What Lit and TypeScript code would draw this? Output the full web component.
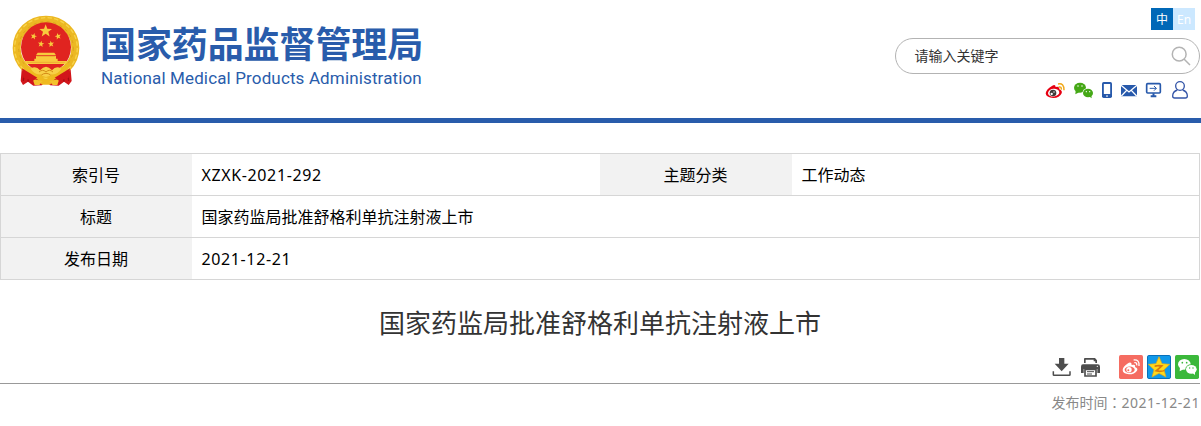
import { LitElement, html, css, svg } from "lit";
import { customElement, property } from "lit/decorators.js";

const star = (cx: number, cy: number, r: number, turn = 0) => {
  const points = Array.from({ length: 10 }, (_, i) => {
    const a = ((i * 36 - 90 + turn) * Math.PI) / 180;
    const d = i % 2 ? r * 0.42 : r;
    return `${(cx + d * Math.cos(a)).toFixed(1)},${(cy + d * Math.sin(a)).toFixed(1)}`;
  });
  return svg`<polygon points=${points.join(" ")} />`;
};

@customElement("national-emblem")
class NationalEmblem extends LitElement {
  static styles = css`
    :host {
      display: block;
    }
    svg {
      display: block;
    }
  `;

  render() {
    return html`
      <svg width="68" height="72" viewBox="36 30 204 216">
        <path d="M66 183 L62 228 L69 240 L84 230 L100 242 L126 241 L138 228 L150 241 L176 242 L192 230 L206 240 L215 228 L211 183 L180 196 H98 Z" fill="#d2161b" />
        <path d="M74 192 l-4 36 M88 200 l-4 30 M202 192 l4 36 M188 200 l4 30" stroke="#a50c12" stroke-width="4" />
        <ellipse cx="138" cy="129" rx="88" ry="85" fill="none" stroke="#ecb823" stroke-width="24" />
        <ellipse cx="138" cy="129" rx="94" ry="91" fill="none" stroke="#f8d44a" stroke-width="4" stroke-dasharray="13 7" />
        <ellipse cx="138" cy="129" rx="82" ry="79" fill="none" stroke="#dca31d" stroke-width="3" stroke-dasharray="9 11" />
        <circle cx="138" cy="127" r="75" fill="#e02420" />
        <g fill="#f8cb3d">
          ${star(137, 78, 20)} ${star(101, 94, 10, 15)} ${star(174, 94, 10, -15)}
          ${star(123, 117, 10, 8)} ${star(153, 117, 10, -8)}
          <path d="M113 143 h50 l5 8 h-60z" />
          <path d="M108 153 h60 v12 h-60z" />
          <path d="M103 161 h70 v7 h28 l-3 9 H78 l-3-9 h28z" />
        </g>
        <path d="M110 154 h56 M82 172 h112" stroke="#e58e28" stroke-width="1.5" />
        <path d="M70 179 Q96 183 112 205 Q126 222 138 222 Q150 222 164 205 Q180 183 206 179 Q190 204 170 215 L150 239 H126 L106 215 Q86 204 70 179Z" fill="#efb91f" />
        <path d="M92 191 Q108 181 120 196 Q138 174 156 196 Q168 181 184 191 Q172 210 155 208 Q138 224 121 208 Q104 210 92 191Z" fill="#f8d047" />
        <path d="M117 201 Q128 191 138 201 Q148 191 159 201 M124 210 Q138 200 152 210" fill="none" stroke="#d58b17" stroke-width="3" />
        <path d="M98 222 L128 228 L118 240 H104Z M178 222 L148 228 L158 240 H172Z" fill="#f4c22d" />
        <path d="M66 190 L112 218 L98 228 L70 218Z M210 190 L164 218 L178 228 L206 218Z" fill="#d2161b" />
      </svg>
    `;
  }
}

@customElement("search-box")
class SearchBox extends LitElement {
  static styles = css`
    :host {
      display: block;
    }
    .search {
      box-sizing: border-box;
      display: flex;
      align-items: center;
      justify-content: space-between;
      width: 305px;
      height: 36px;
      padding: 0 8px 0 18.5px;
      border: 1px solid #b3b3b3;
      border-radius: 18px;
      color: #333;
      font-size: 14px;
      line-height: 34px;
    }
    svg {
      display: block;
    }
  `;

  render() {
    return html`
      <div class="search">
        <span>请输入关键字</span>
        <svg width="20" height="20" viewBox="0 0 20 20" fill="none" stroke="#b3b3b3" stroke-width="1.5">
          <circle cx="8.2" cy="8.2" r="6.9" />
          <path d="M13 13 L19 19" />
        </svg>
      </div>
    `;
  }
}

@customElement("quick-links")
class QuickLinks extends LitElement {
  static styles = css`
    :host {
      display: block;
    }
    .links {
      display: flex;
      gap: 7px;
    }
    svg {
      display: block;
    }
  `;

  render() {
    return html`
      <div class="links">
        <svg width="21" height="18" viewBox="0 0 63 54">
          <path d="M22 14 Q31 8 32 18 Q44 15 43 25 Q53 29 50 37 Q44 51 25 51 Q3 50 2 37 Q4 24 22 14Z" fill="#e60012" />
          <ellipse cx="26" cy="35" rx="17" ry="11.5" fill="#fff" transform="rotate(-8 26 35)" />
          <circle cx="24" cy="36" r="10" fill="#3e3a39" />
          <circle cx="20" cy="39" r="3.5" fill="#fff" />
          <circle cx="27" cy="33" r="2" fill="#fff" />
          <path d="M39 9 Q58 5 57 28 M41 18 Q50 16 49 26" fill="none" stroke="#f0a818" stroke-width="4.5" />
        </svg>
        <svg width="21" height="18" viewBox="0 0 63 54">
          <path d="M8 29 L7 40 L20 33Z" fill="#45a816" />
          <ellipse cx="21" cy="20" rx="18" ry="15" fill="#45a816" />
          <ellipse cx="45" cy="36" rx="16.5" ry="14.5" fill="#fff" />
          <ellipse cx="45" cy="36" rx="15" ry="13" fill="#45a816" />
          <path d="M48 46 L56 52 L55 42Z" fill="#45a816" />
          <g fill="#fff">
            <circle cx="15" cy="15" r="2.2" />
            <circle cx="27" cy="15" r="2.2" />
            <circle cx="40" cy="32" r="2" />
            <circle cx="50" cy="32" r="2" />
          </g>
        </svg>
        <svg width="12" height="18" viewBox="0 0 36 54">
          <rect x="3" y="3" width="30" height="48" rx="5" fill="#2759ab" />
          <rect x="8.5" y="9" width="19" height="30" fill="#fff" />
          <circle cx="18" cy="45" r="2.6" fill="#fff" />
        </svg>
        <svg width="18" height="18" viewBox="0 0 54 54">
          <rect x="3" y="12" width="48" height="34" rx="2" fill="#2759ab" />
          <path d="M3 13 L27 33 L51 13 M4 45 L20 28 M50 45 L34 28" fill="none" stroke="#fff" stroke-width="4" />
        </svg>
        <svg width="17" height="18" viewBox="0 0 51 54" fill="none" stroke="#2759ab">
          <rect x="5" y="8" width="41" height="28" rx="3" stroke-width="5" />
          <path d="M14 22 H34 M27 15 L34 22 L27 29" stroke-width="3" />
          <path d="M25.5 37 V46 M17 46 H34" stroke-width="6" />
        </svg>
        <svg width="20" height="18" viewBox="0 0 60 54" fill="none" stroke="#3556a8" stroke-width="4">
          <circle cx="33" cy="15" r="13" />
          <path d="M25 27 Q11 32 11 45 Q11 51 17 51 H49 Q55 51 55 45 Q55 32 41 27" />
        </svg>
      </div>
    `;
  }
}

@customElement("share-tools")
class ShareTools extends LitElement {
  static styles = css`
    :host {
      display: block;
    }
    .tools,
    .share {
      display: flex;
      align-items: center;
    }
    .tools {
      justify-content: flex-end;
      gap: 9px;
    }
    .share {
      gap: 4px;
      padding-left: 9px;
    }
    svg {
      display: block;
    }
  `;

  render() {
    return html`
      <div class="tools">
        <svg width="20" height="24" viewBox="0 0 60 72" fill="#4d4d4d">
          <path d="M21 9 H37 V26 H50 L29 49 L8 26 H21Z" />
          <path d="M4 49 V59 Q4 61 6 61 H52 Q54 61 54 59 V49" fill="none" stroke="#4d4d4d" stroke-width="4.5" />
        </svg>
        <svg width="20" height="24" viewBox="0 0 60 72" fill="#4d4d4d">
          <path d="M9 24 V11 Q9 9 12 9 H42 L48 16 V24 H43 V19 H38 V14 H14 V24Z" />
          <path d="M6 28 H50 Q57 28 57 35 V54 H49 V42 H8 V54 H0 V35 Q0 28 6 28Z" />
          <path d="M12 43 H45 V63 H12Z" fill="#fff" stroke="#4d4d4d" stroke-width="5" />
          <path d="M18 50 H39 M18 57 H33" stroke="#4d4d4d" stroke-width="3" />
          <circle cx="49" cy="34" r="2" fill="#fff" />
        </svg>
        <div class="share">
          <svg width="24" height="24" viewBox="0 0 72 72">
            <rect width="72" height="72" rx="5" fill="#f56c61" />
            <path d="M25 26 Q38 18 38 30 Q51 27 48 36 Q58 40 54 47 Q47 58 30 58 Q11 56 11 45 Q12 34 25 26Z" fill="#fff" />
            <ellipse cx="32" cy="44" rx="15" ry="9.5" fill="#f56c61" />
            <circle cx="30" cy="44" r="8" fill="#fff" />
            <circle cx="28" cy="46" r="3" fill="#f56c61" />
            <path d="M44 15 Q62 13 60 33 M46 23 Q55 22 53 31" fill="none" stroke="#fff" stroke-width="4" />
          </svg>
          <svg width="24" height="24" viewBox="0 0 72 72">
            <rect x="1.5" y="1.5" width="69" height="69" rx="4" fill="#1199e9" stroke="#0870ba" stroke-width="3" />
            <path d="M36 5 L45 26 L68 28 L51 44 L57 66 L36 55 L15 66 L21 44 L4 28 L27 26Z" fill="#ffd91b" stroke="#e9aa12" stroke-width="2" />
            <path d="M23 31 Q36 27 50 31 L34 46 Q44 48 53 44 V49 Q38 54 22 49 L38 35 Q30 34 23 36Z" fill="#d9780c" />
          </svg>
          <svg width="24" height="24" viewBox="0 0 72 72">
            <rect width="72" height="72" rx="5" fill="#3bb83b" />
            <g fill="#fff">
              <ellipse cx="28" cy="28" rx="19" ry="16" />
              <path d="M15 36 L14 49 L27 42Z" />
            </g>
            <ellipse cx="49" cy="43" rx="18" ry="15" fill="#3bb83b" />
            <ellipse cx="49" cy="43" rx="16" ry="13" fill="#fff" />
            <path d="M52 53 L60 60 V49Z" fill="#fff" />
            <g fill="#3bb83b">
              <circle cx="22" cy="23" r="2.5" />
              <circle cx="35" cy="23" r="2.5" />
              <circle cx="44" cy="39" r="2.2" />
              <circle cx="54" cy="39" r="2.2" />
            </g>
          </svg>
        </div>
      </div>
    `;
  }
}

@customElement("info-table")
class InfoTable extends LitElement {
  static styles = css`
    :host {
      display: block;
    }
    .table {
      border: 1px solid #d6d6d6;
      border-bottom: none;
      font-size: 16px;
      line-height: 43px;
      color: #000;
    }
    .row {
      display: grid;
      grid-template-columns: 191px 408px 192px 1fr;
      grid-template-rows: 41px;
      border-bottom: 1px solid #d6d6d6;
    }
    .label {
      padding-right: 1px;
      background: #f2f2f2;
      text-align: center;
    }
    .value {
      padding: 0 9.5px;
      white-space: nowrap;
    }
    .code {
      letter-spacing: 0.62px;
    }
  `;

  @property({ attribute: false }) rows: string[][] = [];

  render() {
    return html`
      <div class="table">
        ${this.rows.map(
          (row) => html`
            <div class="row">
              ${row.map(
                (cell, i) => html`
                  <div class=${i % 2 ? (/^[\w-]+$/.test(cell) ? "value code" : "value") : "label"}>${cell}</div>
                `
              )}
            </div>
          `
        )}
      </div>
    `;
  }
}

@customElement("app-root")
class AppRoot extends LitElement {
  static styles = css`
    :host {
      display: block;
      height: 426px;
      overflow: hidden;
      background: #fff;
      font-family: "Noto Sans", "Noto Sans CJK SC", sans-serif;
    }
    header {
      display: flex;
      justify-content: space-between;
      box-sizing: border-box;
      height: 123px;
      border-bottom: 5px solid #295cab;
    }
    .brand {
      display: flex;
      gap: 20px;
      padding: 15px 0 0 12px;
    }
    .names {
      padding-top: 6px;
      color: #295cab;
      white-space: nowrap;
    }
    .name-cn {
      font: bold 36px/42px "Noto Sans CJK SC", sans-serif;
      letter-spacing: -0.1px;
    }
    .name-en {
      padding: 3px 0 0 1px;
      font: 17px/24px Roboto, sans-serif;
      letter-spacing: 0.14px;
    }
    .side {
      display: flex;
      flex-direction: column;
      align-items: flex-end;
      padding: 8px 1px 0 0;
    }
    .lang {
      display: flex;
      margin-right: 5px;
      color: #fff;
      font-size: 12px;
      line-height: 23px;
      text-align: center;
    }
    .lang span {
      width: 22px;
      height: 22px;
      background: #cce8ff;
    }
    .lang .current {
      background: #0068b7;
    }
    search-box {
      margin-top: 8px;
    }
    quick-links {
      margin: 7px 11px 0 0;
    }
    main {
      width: 1200px;
      padding-top: 30px;
    }
    h1 {
      margin: 23px 0 12px;
      color: #333;
      font-size: 26px;
      font-weight: normal;
      line-height: 40px;
      text-align: center;
    }
    share-tools {
      padding: 0 1px 4px 0;
      border-bottom: 1px solid #999;
    }
    .date {
      padding-top: 7px;
      color: #888;
      font-size: 14px;
      line-height: 22px;
      text-align: right;
    }
    .colon {
      font-family: "Noto Sans CJK TC", sans-serif;
    }
    .day {
      letter-spacing: 0.55px;
    }
  `;

  private rows = [
    ["索引号", "XZXK-2021-292", "主题分类", "工作动态"],
    ["标题", "国家药监局批准舒格利单抗注射液上市"],
    ["发布日期", "2021-12-21"],
  ];

  render() {
    return html`
      <header>
        <div class="brand">
          <national-emblem></national-emblem>
          <div class="names">
            <div class="name-cn">国家药品监督管理局</div>
            <div class="name-en">National Medical Products Administration</div>
          </div>
        </div>
        <div class="side">
          <div class="lang"><span class="current">中</span><span>En</span></div>
          <search-box></search-box>
          <quick-links></quick-links>
        </div>
      </header>
      <main>
        <info-table .rows=${this.rows}></info-table>
        <h1>国家药监局批准舒格利单抗注射液上市</h1>
        <share-tools></share-tools>
        <div class="date">发布时间<span class="colon">：</span><span class="day">2021-12-21</span></div>
      </main>
    `;
  }
}
